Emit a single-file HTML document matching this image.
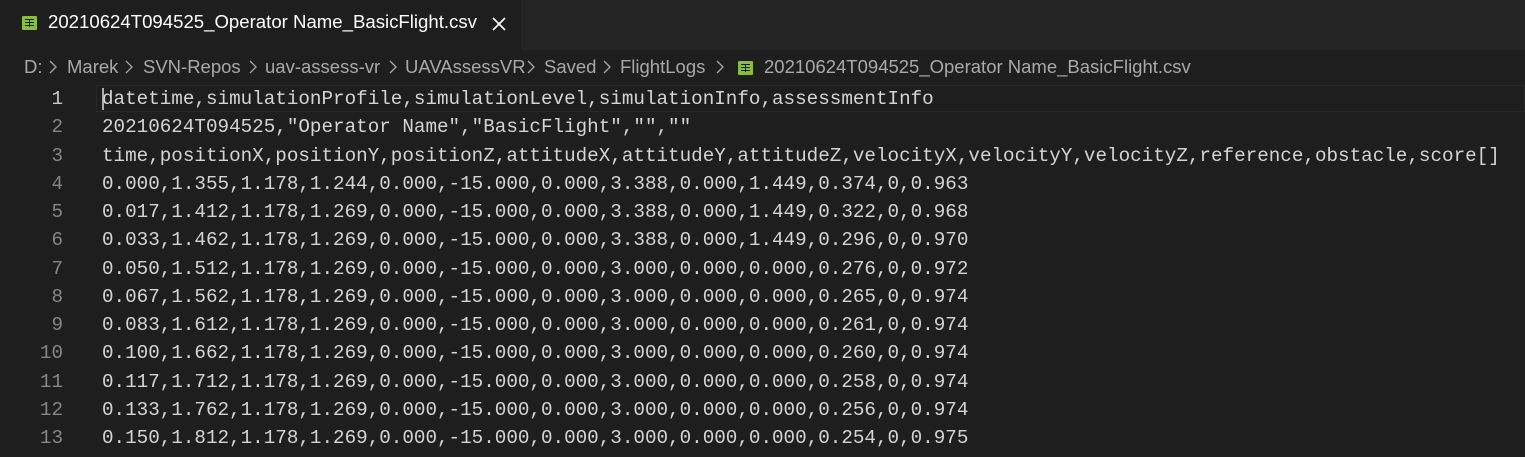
<!DOCTYPE html><html><head><style>
body{margin:0;width:1525px;height:457px;background:#1e1e1e;overflow:hidden;font-family:"Segoe UI","Liberation Sans",sans-serif}
.tabbar{position:absolute;left:0;top:0;width:1525px;height:50px;background:#252526}
.tab{position:absolute;left:0;top:0;width:521px;height:50px;background:#1e1e1e;color:#fff;font-size:19px}
.ic{position:absolute;width:15px;height:14px;background:#89bd3f;border-radius:1px}
.ic:after{content:"";position:absolute;left:3px;top:3px;width:9px;height:8px;background:repeating-linear-gradient(#1e1e1e 0 1px,transparent 1px 3px),linear-gradient(90deg,transparent 4px,#1e1e1e 4px 5px,transparent 5px)}
.b{position:absolute;top:56px;color:#a9a9a9;font-size:18.5px;white-space:pre}
.ch{position:absolute;top:59px;display:block}
.ed{position:absolute;left:0;top:85px;font-family:"Liberation Mono",monospace;font-size:19.25px;color:#d4d4d4}
.l{position:relative;height:28.25px;line-height:28.25px;white-space:pre}
.n{position:absolute;left:0;width:63px;text-align:right;color:#858585}
.t{position:absolute;left:102px}
.cur{position:absolute;left:96px;top:85px;width:1429px;height:27px;border:1px solid #282828;box-sizing:border-box}
</style></head><body>
<div class="tabbar"><div class="tab"><div class="ic" style="left:22px;top:16px"></div><span style="position:absolute;left:48px;top:11px;font-size:18.6px">20210624T094525_Operator Name_BasicFlight.csv</span><svg style="position:absolute;left:492px;top:17px" width="14" height="14"><path d="M1 1L13 13M13 1L1 13" stroke="#fff" stroke-width="1.6"/></svg></div></div>
<span class="b" style="left:24px">D:</span>
<span class="b" style="left:67px">Marek</span>
<span class="b" style="left:143px">SVN-Repos</span>
<span class="b" style="left:265px">uav-assess-vr</span>
<span class="b" style="left:405px">UAVAssessVR</span>
<span class="b" style="left:544px">Saved</span>
<span class="b" style="left:620px">FlightLogs</span>
<span class="b" style="left:764px">20210624T094525_Operator Name_BasicFlight.csv</span>
<svg class="ch" style="left:48px" width="10" height="16"><path d="M2 2L8 8L2 14" stroke="#a9a9a9" fill="none" stroke-width="1.3"/></svg>
<svg class="ch" style="left:124px" width="10" height="16"><path d="M2 2L8 8L2 14" stroke="#a9a9a9" fill="none" stroke-width="1.3"/></svg>
<svg class="ch" style="left:248px" width="10" height="16"><path d="M2 2L8 8L2 14" stroke="#a9a9a9" fill="none" stroke-width="1.3"/></svg>
<svg class="ch" style="left:388px" width="10" height="16"><path d="M2 2L8 8L2 14" stroke="#a9a9a9" fill="none" stroke-width="1.3"/></svg>
<svg class="ch" style="left:526px" width="10" height="16"><path d="M2 2L8 8L2 14" stroke="#a9a9a9" fill="none" stroke-width="1.3"/></svg>
<svg class="ch" style="left:602px" width="10" height="16"><path d="M2 2L8 8L2 14" stroke="#a9a9a9" fill="none" stroke-width="1.3"/></svg>
<svg class="ch" style="left:715px" width="10" height="16"><path d="M2 2L8 8L2 14" stroke="#a9a9a9" fill="none" stroke-width="1.3"/></svg>
<div class="ic" style="left:738px;top:61px"></div>
<div class="cur"></div>
<div style="position:absolute;left:102px;top:88px;width:2px;height:22px;background:#aeafad"></div>
<div class="ed">
<div class="l"><span class="n" style="color:#c6c6c6">1</span><span class="t">datetime,simulationProfile,simulationLevel,simulationInfo,assessmentInfo</span></div>
<div class="l"><span class="n">2</span><span class="t">20210624T094525,"Operator Name","BasicFlight","",""</span></div>
<div class="l"><span class="n">3</span><span class="t">time,positionX,positionY,positionZ,attitudeX,attitudeY,attitudeZ,velocityX,velocityY,velocityZ,reference,obstacle,score[]</span></div>
<div class="l"><span class="n">4</span><span class="t">0.000,1.355,1.178,1.244,0.000,-15.000,0.000,3.388,0.000,1.449,0.374,0,0.963</span></div>
<div class="l"><span class="n">5</span><span class="t">0.017,1.412,1.178,1.269,0.000,-15.000,0.000,3.388,0.000,1.449,0.322,0,0.968</span></div>
<div class="l"><span class="n">6</span><span class="t">0.033,1.462,1.178,1.269,0.000,-15.000,0.000,3.388,0.000,1.449,0.296,0,0.970</span></div>
<div class="l"><span class="n">7</span><span class="t">0.050,1.512,1.178,1.269,0.000,-15.000,0.000,3.000,0.000,0.000,0.276,0,0.972</span></div>
<div class="l"><span class="n">8</span><span class="t">0.067,1.562,1.178,1.269,0.000,-15.000,0.000,3.000,0.000,0.000,0.265,0,0.974</span></div>
<div class="l"><span class="n">9</span><span class="t">0.083,1.612,1.178,1.269,0.000,-15.000,0.000,3.000,0.000,0.000,0.261,0,0.974</span></div>
<div class="l"><span class="n">10</span><span class="t">0.100,1.662,1.178,1.269,0.000,-15.000,0.000,3.000,0.000,0.000,0.260,0,0.974</span></div>
<div class="l"><span class="n">11</span><span class="t">0.117,1.712,1.178,1.269,0.000,-15.000,0.000,3.000,0.000,0.000,0.258,0,0.974</span></div>
<div class="l"><span class="n">12</span><span class="t">0.133,1.762,1.178,1.269,0.000,-15.000,0.000,3.000,0.000,0.000,0.256,0,0.974</span></div>
<div class="l"><span class="n">13</span><span class="t">0.150,1.812,1.178,1.269,0.000,-15.000,0.000,3.000,0.000,0.000,0.254,0,0.975</span></div>
</div>
</body></html>
